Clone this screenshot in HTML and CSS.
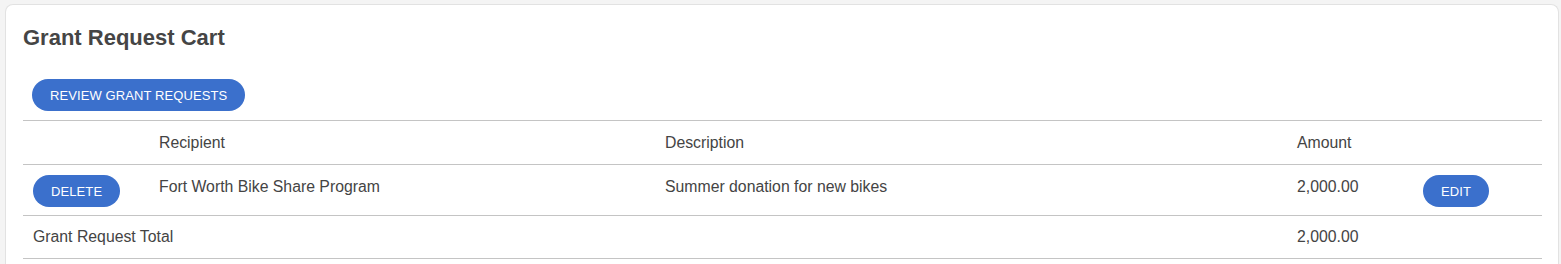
FILE: index.html
```html
<!DOCTYPE html>
<html lang="en">
<head>
<meta charset="utf-8">
<title>Grant Request Cart</title>
<link rel="stylesheet" href="styles.css">
</head>
<body>
<div class="card">
  <h2 class="title">Grant Request Cart</h2>
  <div class="actions">
    <button class="btn">Review Grant Requests</button>
  </div>
  <table class="cart">
    <colgroup>
      <col class="c1"><col class="c2"><col class="c3"><col class="c4"><col class="c5">
    </colgroup>
    <thead>
      <tr>
        <th></th>
        <th>Recipient</th>
        <th>Description</th>
        <th>Amount</th>
        <th></th>
      </tr>
    </thead>
    <tbody>
      <tr>
        <td><button class="btn">Delete</button></td>
        <td>Fort Worth Bike Share Program</td>
        <td>Summer donation for new bikes</td>
        <td>2,000.00</td>
        <td><button class="btn">Edit</button></td>
      </tr>
      <tr class="total">
        <td colspan="3">Grant Request Total</td>
        <td>2,000.00</td>
        <td></td>
      </tr>
    </tbody>
  </table>
</div>
</body>
</html>
```
FILE: styles.css
```css
html, body {
  margin: 0;
  padding: 0;
  background: #f4f4f4;
  font-family: "Liberation Sans", Arial, sans-serif;
  color: #444444;
}
body {
  padding: 4px 2px 0 5px;
  overflow: hidden;
}
.card {
  background: #ffffff;
  border: 1px solid #e2e2e2;
  border-bottom: none;
  border-radius: 8px 8px 0 0;
  padding: 20px 16px 20px 17px;
  box-sizing: border-box;
}
.title {
  margin: 0;
  font-size: 22px;
  font-weight: bold;
  line-height: 26px;
  color: #454545;
}
.actions {
  padding: 28px 0 9px 9px;
}
.btn {
  background: #3b70cc;
  color: #ffffff;
  border: none;
  border-radius: 16px;
  height: 32px;
  padding: 0 18px;
  font-family: "Liberation Sans", Arial, sans-serif;
  font-size: 13px;
  letter-spacing: 0.1px;
  text-transform: uppercase;
  cursor: pointer;
}
.cart {
  width: 100%;
  border-collapse: collapse;
  table-layout: fixed;
  font-size: 15.8px;
}
.c1 { width: 126px; }
.c2 { width: 506px; }
.c3 { width: 632px; }
.c4 { width: 126px; }
.cart th, .cart td {
  text-align: left;
  font-weight: normal;
  vertical-align: top;
  padding: 10px 10px 8px 10px;
  line-height: 24px;
  border-top: 1px solid #c4c4c4;
  border-bottom: 1px solid #c4c4c4;
  color: #444444;
}
.cart th {
  padding-bottom: 9px;
}
.cart .total td {
  padding-top: 9px;
  padding-bottom: 9px;
}
.cart td .btn {
  display: block;
}
```
